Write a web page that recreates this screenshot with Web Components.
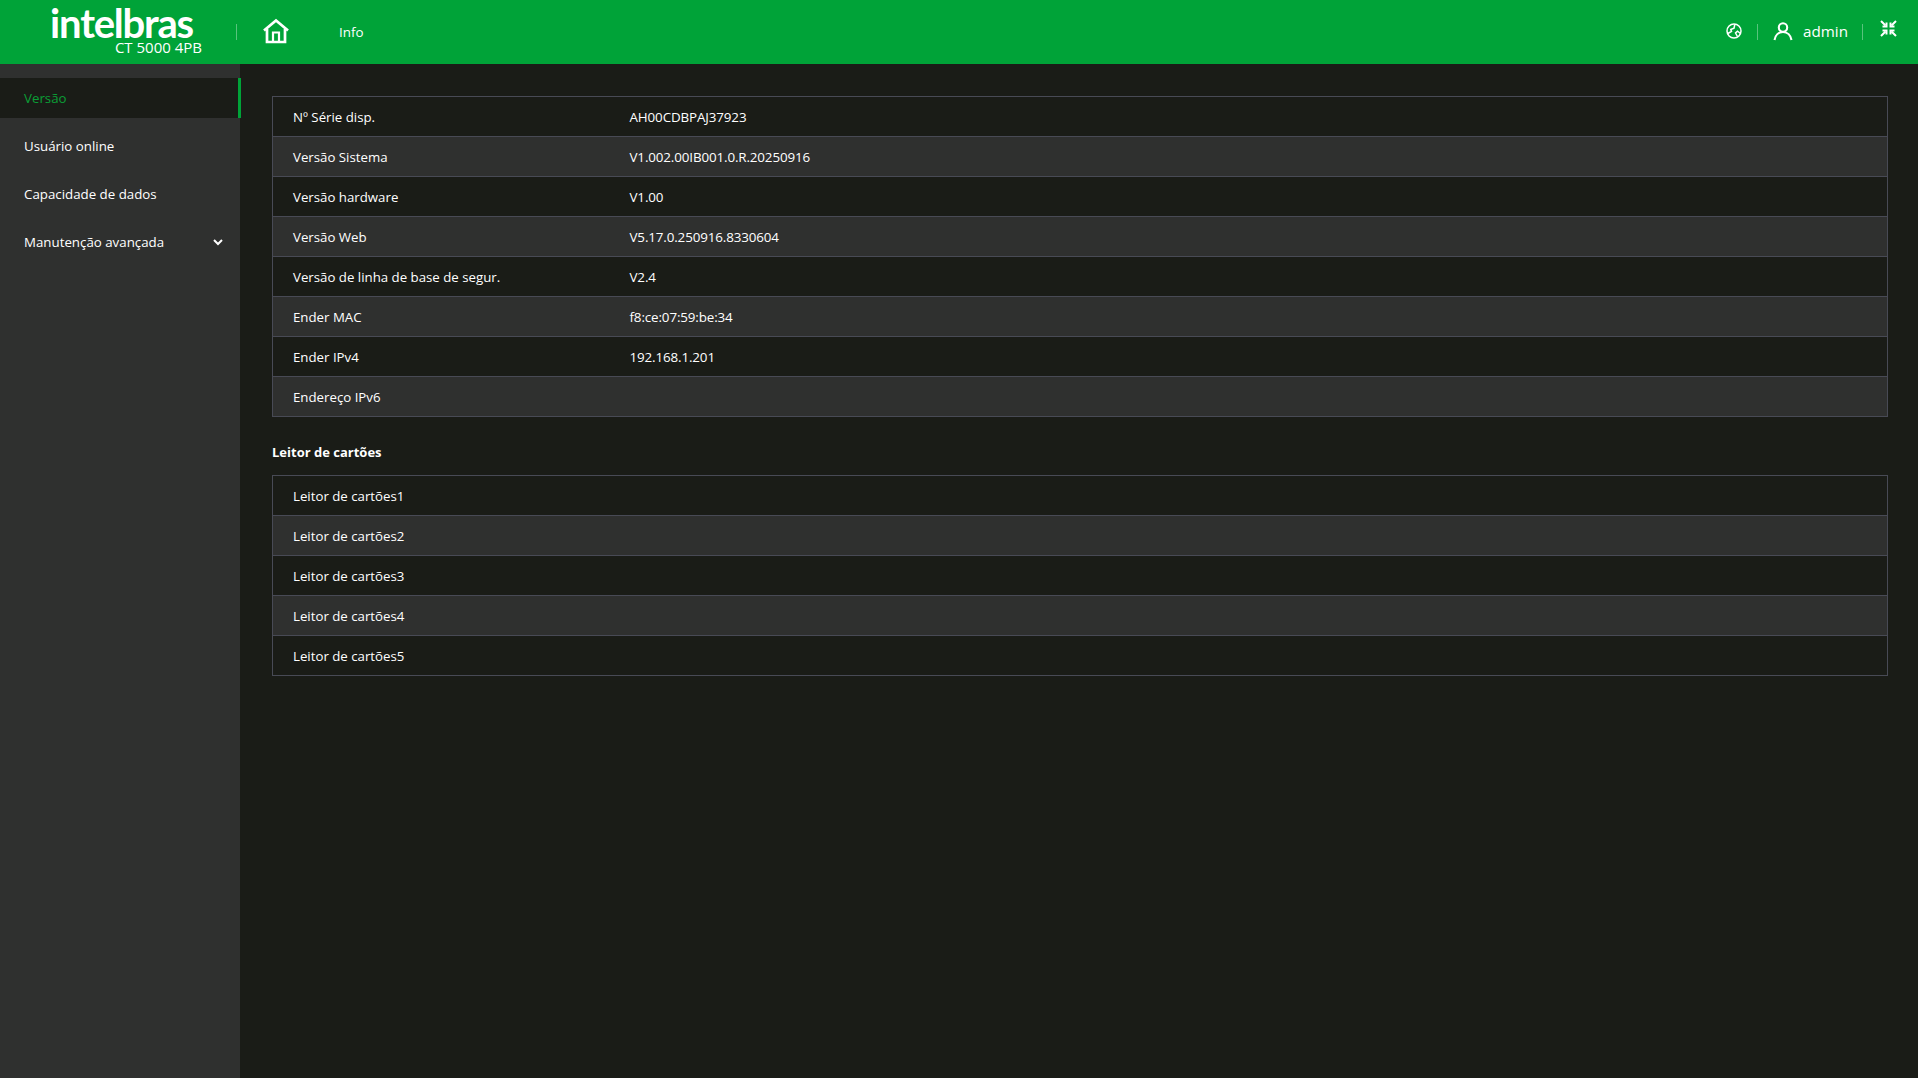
<!DOCTYPE html>
<html lang="pt"><head><meta charset="utf-8"><title>Info</title>
<style>
html,body{margin:0;height:100%;background:#1a1c17;overflow:hidden}
body{font:13.4px "Open Sans","Noto Sans",sans-serif;color:#fff}
</style></head><body>
<app-shell>
<top-bar slot="top"></top-bar>
<side-menu slot="side">
<menu-item active>Versão</menu-item>
<menu-item>Usuário online</menu-item>
<menu-item>Capacidade de dados</menu-item>
<menu-item expandable>Manutenção avançada</menu-item>
</side-menu>
<info-table>
<info-row label="Nº Série disp." value="AH00CDBPAJ37923"></info-row>
<info-row label="Versão Sistema" value="V1.002.00IB001.0.R.20250916"></info-row>
<info-row label="Versão hardware" value="V1.00"></info-row>
<info-row label="Versão Web" value="V5.17.0.250916.8330604"></info-row>
<info-row label="Versão de linha de base de segur." value="V2.4"></info-row>
<info-row label="Ender MAC" value="f8:ce:07:59:be:34"></info-row>
<info-row label="Ender IPv4" value="192.168.1.201"></info-row>
<info-row label="Endereço IPv6" value=""></info-row>
</info-table>
<section-title>Leitor de cartões</section-title>
<info-table>
<info-row label="Leitor de cartões1" value=""></info-row>
<info-row label="Leitor de cartões2" value=""></info-row>
<info-row label="Leitor de cartões3" value=""></info-row>
<info-row label="Leitor de cartões4" value=""></info-row>
<info-row label="Leitor de cartões5" value=""></info-row>
</info-table>
</app-shell>
<script>
const def=(name,html)=>customElements.define(name,class extends HTMLElement{
  connectedCallback(){ if(this.shadowRoot) return; const r=this.attachShadow({mode:'open'}); r.innerHTML=typeof html==='function'?html(this):html; }
});
def('app-shell',`<style>
:host{display:grid;grid-template-columns:240px 1fr;grid-template-rows:64px 1fr;height:100vh;width:100%}
.t{grid-column:1/3;display:block}
.m{padding:32px 30px 0 32px;min-width:0}
</style><div class="t"><slot name="top"></slot></div><slot name="side"></slot><div class="m"><slot></slot></div>`);
def('top-bar',`<style>
:host{display:flex;align-items:center;height:64px;background:#00a338;color:#fff}
.brand{width:236px;height:64px;display:flex;flex-direction:column;align-items:flex-end;box-sizing:border-box;padding:7px 34px 0 0}
.logo{font:700 40px/33px "Lato","Open Sans",sans-serif;letter-spacing:-1.2px;height:33px;margin-right:9px}
.model{font-size:15px;line-height:15px;margin-top:0}
.sep{width:1px;height:16px;background:rgba(255,255,255,.35)}
.home{margin-left:26px;display:block;margin-top:-2px}
.info{margin-left:50px;font-size:13.4px;flex:1;margin-top:-1px}
.r{display:flex;align-items:center}
.admin{font-size:15.2px;margin:-2px 14px 0 10px}
</style>
<div class="brand"><div class="logo">intelbras</div><div class="model">CT 5000 4PB</div></div>
<span class="sep"></span>
<svg class="home" width="26" height="26" viewBox="0 0 26 26" fill="none" stroke="#fff" stroke-width="2.700"><path d="M1 12.500 13 2.500 25 12.500"/><path d="M4 11v13h18V11"/><path d="M10 24V14.500h6V24" stroke-width="2.200"/></svg>
<span class="info">Info</span>
<div class="r">
<svg width="16" height="16" viewBox="0 0 16 16" fill="none" stroke="#fff" stroke-width="1.500" style="margin-right:15.500px;margin-top:-2px"><circle cx="8" cy="8" r="7"/><path d="M1.800 10.500 5.500 8.500 4.800 6.500 8 5.200 8.800 1.500"/><path d="M14.500 10.500 11.500 8.200 9.500 10l2 3.500"/></svg>
<span class="sep"></span>
<svg width="20" height="20" viewBox="0 0 20 20" fill="none" stroke="#fff" stroke-width="2.100" style="margin-left:15px;margin-top:-2px"><circle cx="10" cy="6.500" r="4.200"/><path d="M1.500 19c.8-4.500 4-8 8.500-8s7.700 3.500 8.500 8"/></svg>
<span class="admin">admin</span>
<span class="sep"></span>
<svg width="17" height="17" viewBox="0 0 17 17" fill="none" stroke="#fff" stroke-width="2" style="margin:-8px 21px 0 17px"><path d="M1 1l4.500 4.500M16 1l-4.500 4.500M1 16l4.500-4.500M16 16l-4.500-4.500"/><path d="M2.500 6.500h4V2.500M14.500 6.500h-4V2.500M2.500 10.500h4v4M14.500 10.500h-4v4"/></svg>
</div>`);
def('side-menu',`<style>
:host{display:flex;flex-direction:column;gap:8px;background:#2f302f;padding-top:14px;box-sizing:border-box}
</style><slot></slot>`);
def('menu-item',h=>`<style>
:host{display:flex;align-items:center;justify-content:space-between;height:40px;padding:0 17px 0 24px;position:relative;font-size:13.3px;color:#fff}
:host([active]){background:#1a1c17;color:#0a9e36}
:host([active])::after{content:"";position:absolute;left:238px;top:0;bottom:0;width:3px;background:#00a338}
span{margin-top:-1px}
</style><span><slot></slot></span>${h.hasAttribute('expandable')?'<svg width="10" height="7" viewBox="0 0 10 7" fill="none" stroke="#fff" stroke-width="2"><path d="M1 1l4 4 4-4"/></svg>':''}`);
def('info-table',`<style>
:host{display:block;border:1px solid #484a55;border-top:0}
::slotted(info-row:nth-child(even)){background:#2f302f}
</style><slot></slot>`);
def('info-row',h=>`<style>
:host{display:flex;align-items:center;height:39px;border-top:1px solid #484a55;padding-left:20px;font-size:13.25px;color:#fff}
.l{width:336.500px}
.v{font-size:13.4px;letter-spacing:-.13px}
</style><span class="l">${h.getAttribute('label')}</span><span class="v">${h.getAttribute('value')}</span>`);
def('section-title',`<style>
:host{display:block;font-weight:700;font-size:13px;line-height:20px;margin:25px 0 13px}
</style><slot></slot>`);
</script>
</body></html>
